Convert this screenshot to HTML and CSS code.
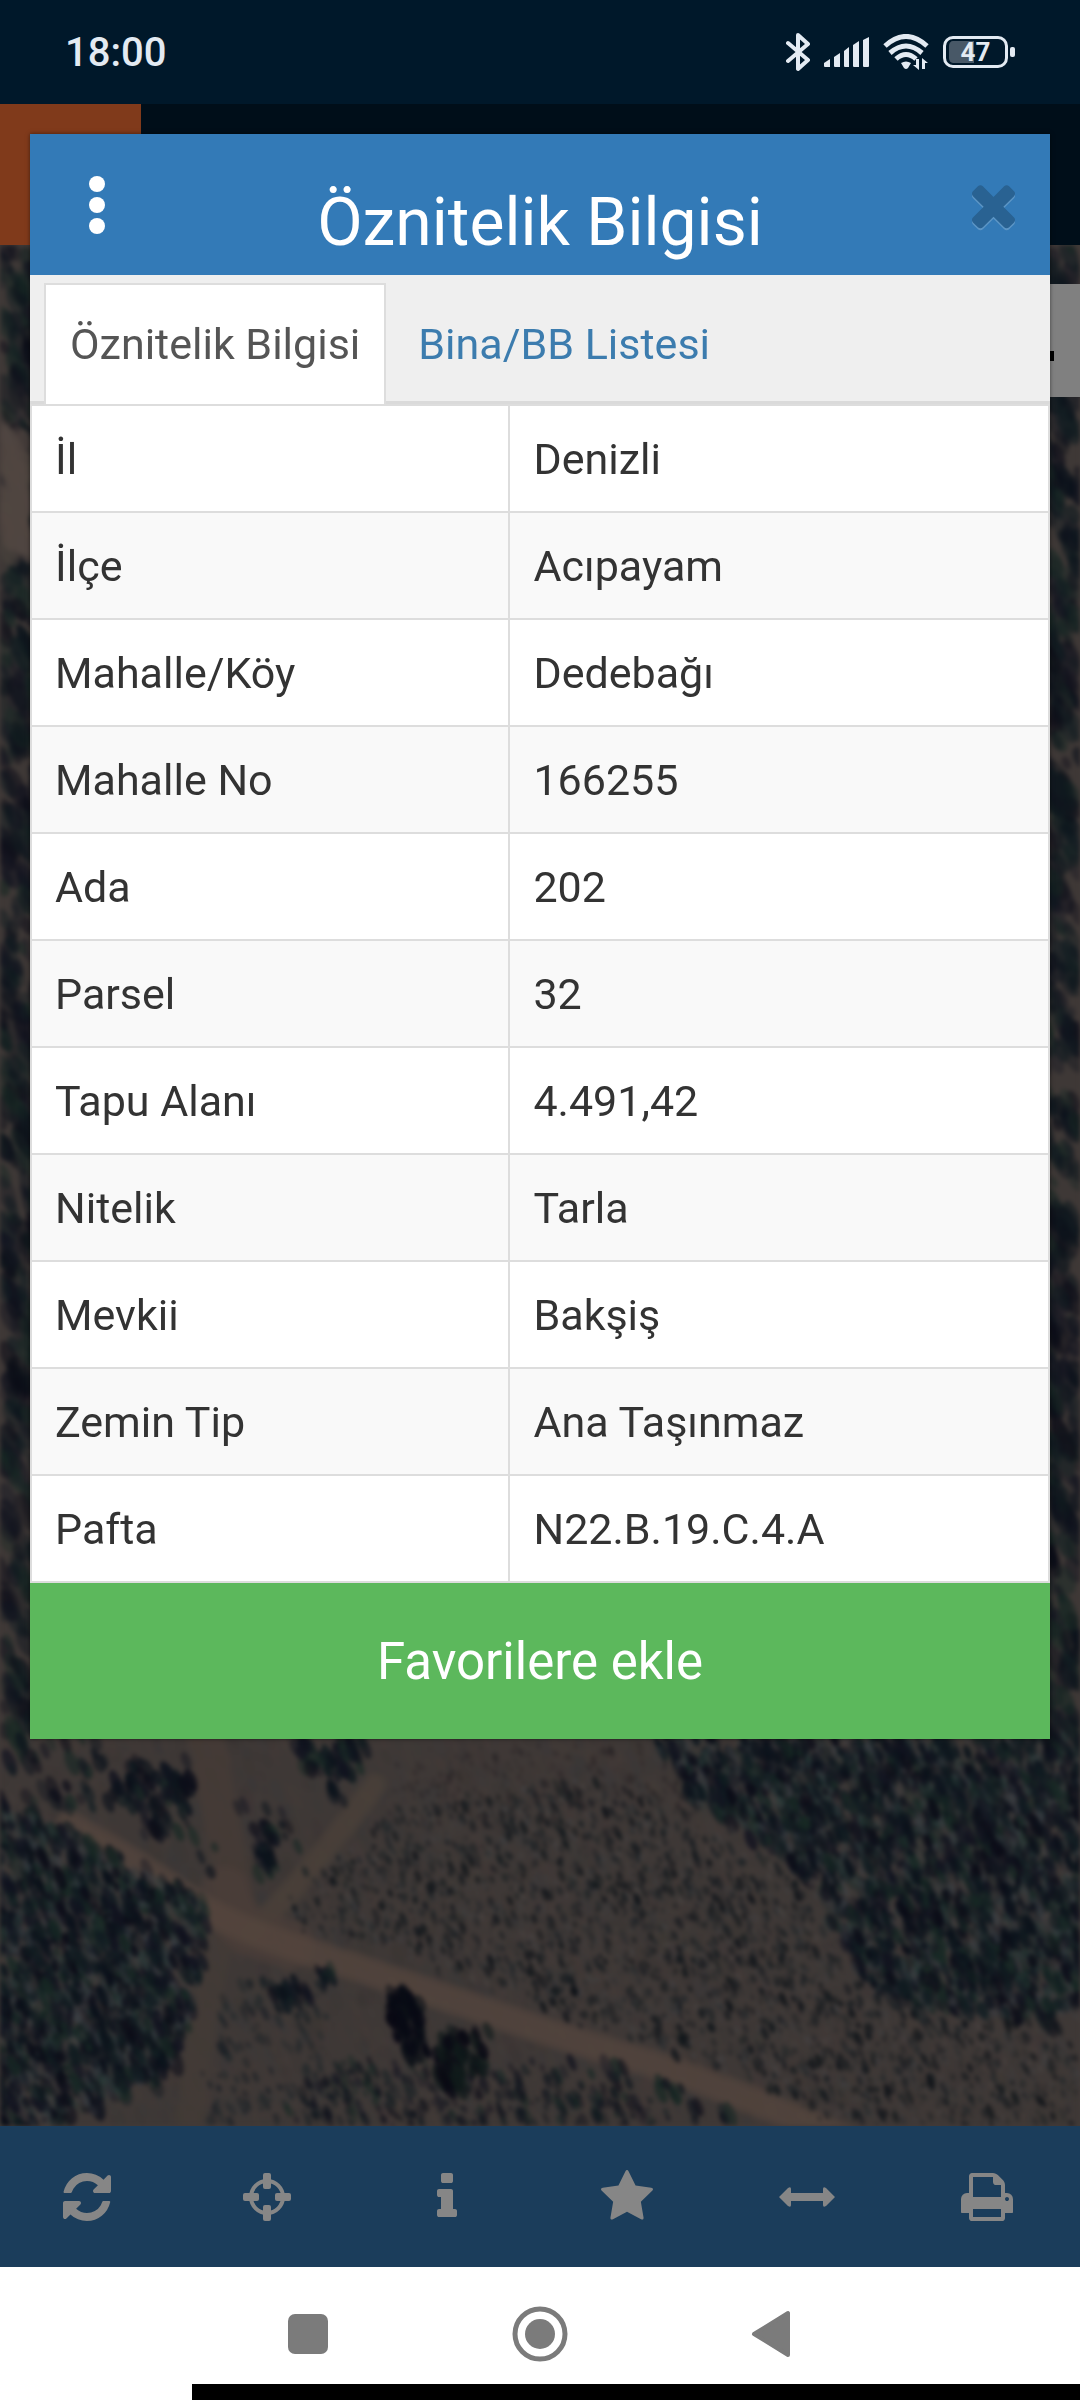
FILE: index.html
```html
<!DOCTYPE html>
<html lang="tr">
<head>
    <meta charset="utf-8">
    <meta name="viewport" content="width=device-width, initial-scale=1">
    <title>Öznitelik Bilgisi</title>
    <link rel="stylesheet" href="styles.css">
</head>
<body>
    <header class="status-bar">
        <time>18:00</time>
        <div class="status-icons">
            <svg width="24" height="40" viewBox="0 0 24 40">
                <path d="M2 11 L22 28 L12 37 V3 L22 12 L2 29" fill="none" stroke="#e3eaf2" stroke-width="4" stroke-linejoin="round" stroke-linecap="round"/>
            </svg>
            <svg width="45" height="30" viewBox="0 0 45 30" fill="#e3eaf2">
                <path d="M0 26l6-4v8h-5q-1 0-1-1z"/>
                <path d="M10 20l6-4v14h-5q-1 0-1-1z"/>
                <path d="M20 14l5-4v20h-4q-1 0-1-1z"/>
                <path d="M29 8l6-4v26h-5q-1 0-1-1z"/>
                <path d="M39 3l6-3v29q0 1-1 1h-4q-1 0-1-1z"/>
            </svg>
            <svg width="46" height="36" viewBox="0 0 46 36">
                <g fill="none" stroke="#e3eaf2" stroke-width="5">
                    <path d="M2 12q21-19 42 0"/>
                    <path d="M7 19q16-14 32 0"/>
                    <path d="M13 25q10-9 20 0"/>
                </g>
                <path d="M18 29q5-3 10 0l-3 5q-2 2-4 0z" fill="#e3eaf2"/>
                <path d="M36 25v11l-6-5h3v-6zM39 35v-11l6 5h-3v6z" fill="#e3eaf2"/>
            </svg>
            <div class="battery"><span>47</span></div>
        </div>
    </header>

    <div class="app">
        <div class="app-bar"><div class="app-logo"></div></div>
        <div class="map">
            <canvas id="mapCanvas"></canvas>
            <button class="map-control" aria-label="Harita"><i></i></button>
        </div>
        <nav class="toolbar">
            <button aria-label="Yenile">
                <svg viewBox="0 0 1792 1792"><path d="M1639 1056q0 5-1 7-64 268-268 434.500t-478 166.500q-146 0-282.500-55t-243.500-157l-129 129q-19 19-45 19t-45-19-19-45v-448q0-26 19-45t45-19h448q26 0 45 19t19 45-19 45l-137 137q71 66 161 102t187 36q134 0 250-65t186-179q11-17 53-117 8-23 30-23h192q13 0 22.500 9.500t9.500 22.500zm25-800v448q0 26-19 45t-45 19h-448q-26 0-45-19t-19-45 19-45l138-138q-148-137-349-137-134 0-250 65t-186 179q-11 17-53 117-8 23-30 23h-199q-13 0-22.500-9.500t-9.500-22.500v-7q65-268 270-434.500t480-166.500q146 0 284 55.500t245 156.500l130-129q19-19 45-19t45 19 19 45z"/></svg>
            </button>
            <button aria-label="Konum">
                <svg viewBox="0 0 56 56"><circle cx="28" cy="28" r="16" fill="none" stroke="#868686" stroke-width="4"/><rect x="24" y="4" width="8" height="16" rx="2"/><rect x="24" y="36" width="8" height="16" rx="2"/><rect x="4" y="24" width="16" height="8" rx="2"/><rect x="36" y="24" width="16" height="8" rx="2"/></svg>
            </button>
            <button aria-label="Bilgi">
                <svg viewBox="0 0 1792 1792"><path d="M1216 1344v128q0 26-19 45t-45 19h-512q-26 0-45-19t-19-45v-128q0-26 19-45t45-19h64v-384h-64q-26 0-45-19t-19-45v-128q0-26 19-45t45-19h384q26 0 45 19t19 45v576h64q26 0 45 19t19 45zm-128-1152v192q0 26-19 45t-45 19h-256q-26 0-45-19t-19-45v-192q0-26 19-45t45-19h256q26 0 45 19t19 45z"/></svg>
            </button>
            <button aria-label="Favoriler">
                <svg viewBox="0 0 1792 1792"><path d="M1728 647q0 22-26 48l-363 354 86 500q1 7 1 20 0 21-10.500 35.500t-30.500 14.500q-19 0-40-12l-449-236-449 236q-22 12-40 12-21 0-31.500-14.500t-10.500-35.500q0-6 2-20l86-500-364-354q-25-27-25-48 0-37 56-46l502-73 225-455q19-41 49-41t49 41l225 455 502 73q56 9 56 46z"/></svg>
            </button>
            <button aria-label="Ölçüm">
                <svg viewBox="0 0 56 56"><path d="M0 28L9 19q3-2 3 1v4h32v-4q0-3 3-1l9 9-9 9q-3 2-3-1v-4H12v4q0 3-3 1z"/></svg>
            </button>
            <button aria-label="Yazdır">
                <svg viewBox="0 0 1792 1792"><path d="M448 1536h896v-256h-896v256zm0-640h896v-384h-160q-40 0-68-28t-28-68v-160h-640v640zm1152 64q0-26-19-45t-45-19-45 19-19 45 19 45 45 19 45-19 19-45zm128 0v416q0 13-9.500 22.500t-22.500 9.500h-224v160q0 40-28 68t-68 28h-960q-40 0-68-28t-28-68v-160h-224q-13 0-22.500-9.500t-9.500-22.500v-416q0-79 56.500-135.500t135.500-56.500h64v-544q0-40 28-68t68-28h672q40 0 88 20t76 48l152 152q28 28 48 76t20 88v256h64q79 0 135.500 56.500t56.500 135.500z"/></svg>
            </button>
        </nav>

        <section class="modal">
            <div class="modal-header">
                <button class="menu-btn" aria-label="Menü"><i></i><i></i><i></i></button>
                <h1>Öznitelik Bilgisi</h1>
                <button class="close-btn" aria-label="Kapat">
                    <svg viewBox="0 0 1792 1792"><path d="M1490 1322q0 40-28 68l-136 136q-28 28-68 28t-68-28l-294-294-294 294q-28 28-68 28t-68-28l-136-136q-28-28-28-68t28-68l294-294-294-294q-28-28-28-68t28-68l136-136q28-28 68-28t68 28l294 294 294-294q28-28 68-28t68 28l136 136q28 28 28 68t-28 68l-294 294 294 294q28 28 28 68z"/></svg>
                </button>
            </div>
            <div class="tabs">
                <a href="#bilgi" class="tab active">Öznitelik Bilgisi</a>
                <a href="#liste" class="tab">Bina/BB Listesi</a>
            </div>
            <table id="bilgi">
                <tr><td>İl</td><td>Denizli</td></tr>
                <tr><td>İlçe</td><td>Acıpayam</td></tr>
                <tr><td>Mahalle/Köy</td><td>Dedebağı</td></tr>
                <tr><td>Mahalle No</td><td>166255</td></tr>
                <tr><td>Ada</td><td>202</td></tr>
                <tr><td>Parsel</td><td>32</td></tr>
                <tr><td>Tapu Alanı</td><td>4.491,42</td></tr>
                <tr><td>Nitelik</td><td>Tarla</td></tr>
                <tr><td>Mevkii</td><td>Bakşiş</td></tr>
                <tr><td>Zemin Tip</td><td>Ana Taşınmaz</td></tr>
                <tr><td>Pafta</td><td>N22.B.19.C.4.A</td></tr>
            </table>
            <button class="fav-btn">Favorilere ekle</button>
        </section>
    </div>

    <footer class="nav-bar">
        <button aria-label="Son uygulamalar"><svg viewBox="0 0 56 56"><rect x="8" y="8" width="40" height="40" rx="7"/></svg></button>
        <button aria-label="Ana ekran"><svg viewBox="0 0 56 56"><circle cx="28" cy="28" r="25" fill="none" stroke="#7b7b7b" stroke-width="5"/><circle cx="28" cy="28" r="15"/></svg></button>
        <button aria-label="Geri"><svg viewBox="0 0 56 56"><path d="M10 28L44 7V49z" stroke="#7b7b7b" stroke-width="4" stroke-linejoin="round"/></svg></button>
    </footer>

    <script src="map.js"></script>
</body>
</html>
```
FILE: styles.css
```css
* {
    box-sizing: border-box;
}
body {
    margin: 0;
    min-height: 100vh;
    display: flex;
    flex-direction: column;
    font-family: Roboto, "Noto Sans", sans-serif;
    font-size: 43px;
    color: #333;
    background-color: white;
}
button {
    border: 0;
    padding: 0;
    background: none;
    font-family: inherit;
}
svg {
    display: block;
}

/* phone status bar */
.status-bar {
    height: 104px;
    padding: 0 65px;
    display: flex;
    justify-content: space-between;
    align-items: center;
    background-color: #00182a;
    color: #e3eaf2;
}
.status-bar time {
    font-size: 40px;
    font-weight: 500;
}
.status-icons {
    display: flex;
    align-items: center;
    gap: 14px;
}
.battery {
    position: relative;
    width: 65px;
    height: 32px;
    margin-right: 7px;
    border: 3px solid #e3eaf2;
    border-radius: 10px;
    background: linear-gradient(to right, #485867 47%, transparent 47%) content-box;
    padding: 2px 3px;
    display: flex;
    align-items: center;
    justify-content: center;
    font-size: 26px;
    font-weight: 700;
}
.battery::after {
    content: "";
    position: absolute;
    right: -10px;
    top: 8px;
    width: 5px;
    height: 10px;
    border-radius: 2px;
    background-color: #e3eaf2;
}

/* dimmed application behind the dialog */
.app {
    position: relative;
    flex: 1;
    display: flex;
    flex-direction: column;
}
.app-bar {
    height: 141px;
    background-color: #000e19;
}
.app-logo {
    width: 141px;
    height: 141px;
    background-color: #803a1b;
}
.map {
    position: relative;
    flex: 1;
    overflow: hidden;
    background-color: #433b38;
}
.map canvas {
    position: absolute;
    top: 0;
    left: 0;
    width: 100%;
    height: 100%;
    filter: blur(2px);
}
.map-control {
    position: absolute;
    top: 39px;
    right: 0;
    width: 113px;
    height: 113px;
    padding-top: 30px;
    background-color: #808080;
    display: flex;
    align-items: center;
    justify-content: center;
}
.map-control i {
    width: 60px;
    height: 10px;
    background-color: black;
}
.toolbar {
    height: 141px;
    display: grid;
    grid-template-columns: repeat(6, 1fr);
    background-color: #1b3d5b;
}
.toolbar button {
    display: flex;
    align-items: center;
    justify-content: center;
    padding-right: 6px;
}
.toolbar svg {
    width: 56px;
    height: 56px;
    fill: #868686;
}

/* dialog */
.modal {
    position: absolute;
    top: 30px;
    left: 30px;
    right: 30px;
    background-color: white;
    box-shadow: 0 0 4px rgba(0, 0, 0, 0.5);
}
.modal-header {
    height: 141px;
    padding: 0 24px;
    display: flex;
    align-items: center;
    justify-content: space-between;
    background-color: #337ab7;
    color: white;
}
.modal-header h1 {
    margin: 0;
    padding-top: 36px;
    font-size: 66px;
    line-height: 72px;
    font-weight: 400;
}
.menu-btn,
.close-btn {
    width: 86px;
    display: flex;
    flex-direction: column;
    align-items: center;
    gap: 5px;
}
.menu-btn i {
    width: 16px;
    height: 16px;
    border-radius: 50%;
    background-color: white;
}
.close-btn {
    align-items: flex-end;
}
.close-btn svg {
    width: 65px;
    height: 65px;
    fill: #296292;
    filter: drop-shadow(0 2px 0 #5c95c5);
}
.tabs {
    height: 129px;
    padding: 8px 14px 0;
    display: flex;
    gap: 6px;
    background-color: #efefef;
    border-bottom: 3px solid #dadada;
}
.tab {
    height: 121px;
    padding: 0 24px;
    border: 2px solid transparent;
    border-bottom: 0;
    line-height: 118px;
    color: #3c7cae;
    text-decoration: none;
}
.tab.active {
    color: #555;
    background-color: white;
    border-color: #ddd;
}
table {
    width: 100%;
    border-collapse: collapse;
}
td {
    width: 53%;
    padding: 23px 23px 22px;
    border: 2px solid #ddd;
    line-height: 60px;
}
td:first-child {
    width: 47%;
}
tr:nth-child(even) {
    background-color: #f9f9f9;
}
.fav-btn {
    display: block;
    width: 100%;
    height: 156px;
    background-color: #5cb85c;
    color: white;
    font-size: 51px;
}

/* phone navigation buttons */
.nav-bar {
    position: relative;
    height: 133px;
    display: flex;
    align-items: center;
    justify-content: center;
    gap: 176px;
    background-color: white;
}
.nav-bar svg {
    width: 56px;
    height: 56px;
    fill: #7b7b7b;
}
.nav-bar::after {
    content: "";
    position: absolute;
    left: 192px;
    right: 0;
    bottom: 0;
    height: 16px;
    background-color: black;
}
```
FILE: map.js
```js
var canvas = document.getElementById("mapCanvas");
var ctx = canvas.getContext("2d");
var seed = 7;

function rnd()
{
    seed = (seed * 16807) % 2147483647;
    return seed / 2147483647;
}

// is x,y inside the outline
function inside(points, x, y)
{
    var hit = false;
    for (var i = 0, j = points.length - 1; i < points.length; j = i++)
    {
        var a = points[i], b = points[j];
        if ((a[1] > y) != (b[1] > y) && x < (b[0] - a[0]) * (y - a[1]) / (b[1] - a[1]) + a[0])
        {
            hit = !hit;
        }
    }
    return hit;
}

// scatter blobs over the part of the map inside the outline
function scatter(points, count, min, max, colors, alpha)
{
    var xs = points.map(function(p) { return p[0]; });
    var ys = points.map(function(p) { return p[1]; });
    var x0 = Math.min.apply(null, xs), x1 = Math.max.apply(null, xs);
    var y0 = Math.min.apply(null, ys), y1 = Math.max.apply(null, ys);
    for (var i = 0; i < count; i++)
    {
        var x = x0 + rnd() * (x1 - x0);
        var y = y0 + rnd() * (y1 - y0);
        var r = min + rnd() * (max - min);
        ctx.fillStyle = colors[Math.floor(rnd() * colors.length)];
        ctx.globalAlpha = alpha * (0.5 + rnd() * 0.5);
        // rough outlines so that the tree edges are uneven
        if (inside(points, x + (rnd() - 0.5) * 16, y + (rnd() - 0.5) * 16))
        {
            ctx.beginPath();
            ctx.ellipse(x, y, r * 0.7, r * (1 + rnd() * 0.8), -0.4, 0, 7);
            ctx.fill();
        }
    }
    ctx.globalAlpha = 1;
}

function road(points, width, color)
{
    ctx.beginPath();
    ctx.moveTo(points[0][0], points[0][1]);
    for (var i = 1; i < points.length - 1; i++)
    {
        var mx = (points[i][0] + points[i + 1][0]) / 2;
        var my = (points[i][1] + points[i + 1][1]) / 2;
        ctx.quadraticCurveTo(points[i][0], points[i][1], mx, my);
    }
    ctx.lineTo(points[i][0], points[i][1]);
    ctx.lineCap = "round";
    ctx.strokeStyle = color;
    // three passes give the track a soft edge
    ctx.globalAlpha = 0.4;
    for (var k = 0; k < 3; k++)
    {
        ctx.lineWidth = width + 6 - k * 6;
        ctx.stroke();
    }
    ctx.globalAlpha = 1;
}

function drawMap()
{
    seed = 7;
    canvas.width = canvas.clientWidth;
    canvas.height = canvas.clientHeight;
    var w = 1080, h = 1881;
    ctx.scale(canvas.width / w, canvas.height / h);
    ctx.fillStyle = "#3e3836";
    ctx.fillRect(0, 0, w, h);

    var trees = ["#0b121b", "#111c21", "#11131f", "#172824", "#0b0c17"];
    var glints = ["#3c4146", "#2b3b3a", "#46413f", "#3a3838"];
    scatter([[0, 1480], [w, 1480], [w, h], [0, h]], 4000, 3, 9, ["#443c39", "#39393a", "#453b38", "#3a3533"], 0.35);

    // narrow strips beside the dialog
    scatter([[0, 0], [40, 0], [40, 1500], [0, 1500]], 520, 5, 14, trees, 0.6);
    scatter([[1040, 0], [w, 0], [w, 1500], [1040, 1500]], 560, 5, 14, trees, 0.65);
    scatter([[0, 190], [30, 190], [30, 310], [0, 310]], 80, 8, 14, ["#504641"], 0.8);

    // dirt tracks
    road([[205, 1490], [225, 1590], [240, 1690]], 34, "#463d38");
    road([[225, 1670], [205, 1760], [190, 1870]], 26, "#443b38");
    road([[375, 1540], [330, 1600], [275, 1665], [250, 1690]], 20, "#4a403a");
    road([[225, 1645], [230, 1680], [290, 1700]], 46, "#4a3f39");
    road([[70, 1580], [140, 1620], [225, 1680], [380, 1730], [570, 1795], [690, 1830], [850, 1895]], 25, "#54463f");

    // scrub in the middle and along the bottom
    var scrub = [[285, 1665], [390, 1565], [560, 1535], [680, 1560], [800, 1640], [855, 1740], [1080, 1790], [1080, h], [850, h], [700, 1815], [540, 1760], [400, 1705], [300, 1685]];
    scatter(scrub, 3600, 1, 4, ["#171b20", "#1b2022", "#22272a"], 0.7);
    scatter(scrub, 2000, 1, 3, ["#504b49", "#44464a"], 0.5);
    scatter(scrub, 900, 2, 5, ["#0e1217", "#12171b"], 0.8);
    scatter([[400, 1500], [650, 1500], [700, 1560], [390, 1580]], 260, 1, 3, ["#241f22"], 0.6);
    scatter([[225, 1735], [310, 1735], [350, h], [200, h]], 200, 2, 5, ["#1b2025", "#20272a"], 0.7);
    scatter([[340, 1815], [540, 1820], [720, h], [280, h]], 500, 2, 6, trees, 0.6);

    // forests
    var right = [[650, 1490], [690, 1552], [758, 1592], [799, 1628], [826, 1662], [854, 1725], [916, 1758], [999, 1775], [1090, 1768], [1110, 1490]];
    var left = [[-10, 1552], [69, 1590], [138, 1625], [207, 1660], [200, 1710], [186, 1775], [165, 1828], [50, h], [-10, h]];
    [[right, 1], [left, 0.6]].forEach(function(forest)
    {
        scatter(forest[0], 1500 * forest[1], 4, 12, trees, 0.7);
        scatter(forest[0], 2600 * forest[1], 2, 6, glints, 0.6);
        scatter(forest[0], 1200 * forest[1], 3, 8, trees, 0.85);
    });
    scatter([[115, 1515], [185, 1515], [195, 1570], [150, 1590], [120, 1560]], 100, 4, 9, trees, 0.8);
    scatter([[290, 1490], [370, 1490], [360, 1530], [335, 1550], [300, 1520]], 90, 4, 9, trees, 0.8);
    scatter([[0, 1490], [100, 1490], [120, 1570], [30, 1560]], 60, 4, 9, trees, 0.7);
    scatter([[145, 1570], [345, 1550], [300, 1640], [240, 1640]], 36, 4, 7, trees, 0.7);
    scatter([[252, 1580], [275, 1580], [278, 1630], [255, 1625]], 40, 4, 8, trees, 0.8);

    // trees with long shadows by the road
    scatter([[385, 1745], [415, 1755], [430, 1790], [415, 1815], [392, 1785]], 110, 5, 9, ["#080914", "#0b1017"], 0.9);
    scatter([[435, 1785], [490, 1785], [480, 1820], [450, 1855], [438, 1830]], 110, 4, 9, ["#0a0a14", "#101a1a"], 0.9);
    scatter([[550, 1812], [600, 1812], [680, 1842], [770, 1881], [720, 1875], [640, 1845], [580, 1830]], 120, 4, 8, trees, 0.8);
    scatter([[270, 1735], [310, 1735], [305, 1760], [280, 1765]], 50, 3, 7, trees, 0.7);
    scatter([[316, 1722], [328, 1722], [333, 1745], [324, 1745]], 40, 3, 6, trees, 0.8);
}

drawMap();
window.addEventListener("resize", drawMap);
```
